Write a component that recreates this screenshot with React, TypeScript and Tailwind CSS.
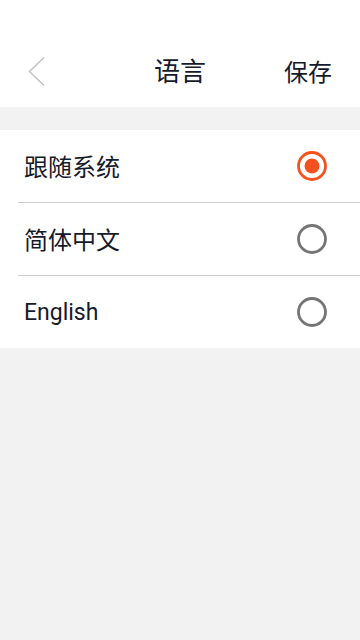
import { useState } from 'react';

const options = ['跟随系统', '简体中文', 'English'];

const font = { fontFamily: 'Roboto, "Noto Sans CJK SC", sans-serif' };

function Radio({ checked }: { checked: boolean }) {
    return (
        <svg width="32" height="32" viewBox="0 0 32 32">
            {checked ? (
                <>
                    <circle cx="16" cy="16" r="13.5" fill="none" stroke="#f4511e" strokeWidth="2.8" />
                    <circle cx="16" cy="16" r="7.5" fill="#f4511e" />
                </>
            ) : (
                <circle cx="16" cy="16" r="13.5" fill="none" stroke="#757575" strokeWidth="2.8" />
            )}
        </svg>
    );
}

export default function App() {
    const [selected, setSelected] = useState(0);

    return (
        <div className="w-[360px] h-[640px] bg-[#f2f2f2] flex flex-col text-[#161a2b]" style={font}>
            <div className="bg-white pt-[36px]">
                <div className="h-[71px] flex items-center relative">
                    <button className="w-[60px] h-full flex items-center pl-[27px]">
                        <svg width="19" height="31" viewBox="0 0 19 31">
                            <path d="M17 1.5 L2.5 15.5 L17 29.5" fill="none" stroke="#c4c4c4" strokeWidth="1.6" />
                        </svg>
                    </button>
                    <div className="absolute left-0 right-0 text-center text-[26px] pt-[2px] pointer-events-none">语言</div>
                    <div className="ml-auto pr-[28px] text-[24px] pt-[2px]">保存</div>
                </div>
            </div>

            <div className="mt-[23px] bg-white">
                {options.map((name, i) => (
                    <div key={name}>
                        {i > 0 && <div className="ml-[18px] h-px bg-[#cfcfcf]" />}
                        <button
                            onClick={() => setSelected(i)}
                            className="w-full h-[72px] flex items-center justify-between pl-[24px] pr-[32px]"
                        >
                            <span className={(i === 2 ? 'text-[23px]' : 'text-[24px]') + ' pt-[3px]'}>{name}</span>
                            <Radio checked={selected === i} />
                        </button>
                    </div>
                ))}
            </div>
        </div>
    );
}
